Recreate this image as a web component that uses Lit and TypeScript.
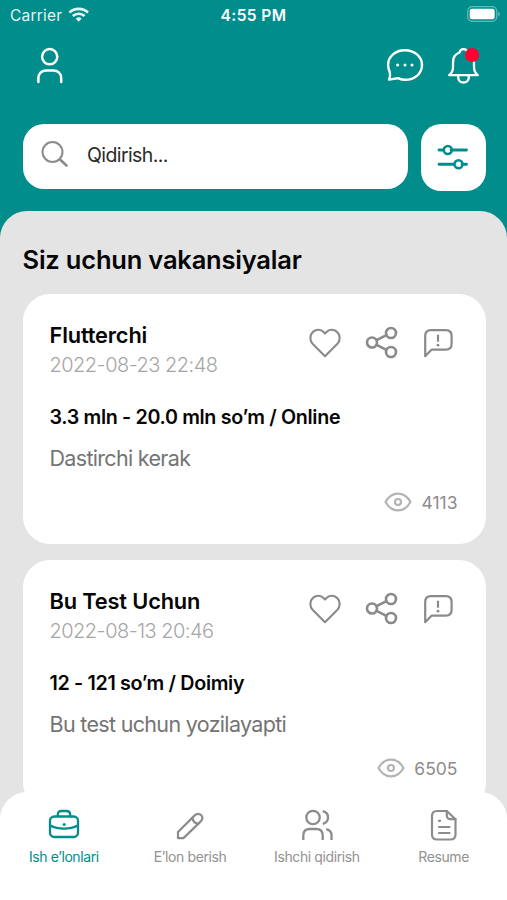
import { LitElement, html, css, svg } from "lit";
import { customElement, property } from "lit/decorators.js";
import { classMap } from "lit/directives/class-map.js";

const icon = (w: number, h: number, body: unknown) =>
  html`<svg width=${w} height=${h} viewBox="0 0 ${w} ${h}" fill="none" stroke="currentColor"
    stroke-linecap="round" stroke-linejoin="round">${body}</svg>`;

const icons = {
  wifi: icon(22, 16, svg`
    <g stroke-width="2.7" stroke-linecap="butt">
      <path d="M1.4 5.5a13.6 13.6 0 0 1 18.6 0"/><path d="M4.8 9.1a8.6 8.6 0 0 1 11.8 0"/>
    </g>
    <path d="M10.7 14.7l-3-3a4.4 4.4 0 0 1 6 0z" fill="currentColor" stroke="none"/>`),
  battery: icon(34, 16, svg`
    <rect x=".7" y=".7" width="29" height="14.6" rx="4.5" stroke-width="1.2" opacity=".4"/>
    <rect x="2.7" y="2.7" width="25" height="10.6" rx="2.4" fill="currentColor" stroke="none"/>
    <path d="M31.2 5.6v4.8q1.7-.7 1.7-2.4t-1.7-2.4z" fill="currentColor" stroke="none" opacity=".4"/>`),
  user: icon(26, 38, svg`
    <g stroke-width="2.5"><circle cx="12.7" cy="9.7" r="7.6"/>
    <path d="M1.4 35v-3.6c0-5 3-8 8-8h6.800c5 0 8 3 8 8V35"/></g>`),
  chat: icon(38, 36, svg`
    <path stroke-width="2.4" d="M3 31.500c1-2.400 1.500-4.800.8-7.300C2.700 21.500 2.100 19.300 2.100 16.900 2.100 8.400 9.500 2.200 18.900 2.200S36 8.600 36 17s-7.200 14.800-17 14.800c-2.500 0-4.200-.5-6.300-1.500-3.100-.4-6.300 1.200-9.700 1.200z"/>
    <g fill="currentColor" stroke="none"><circle cx="11.600" cy="17" r="1.500"/><circle cx="19" cy="17" r="1.500"/><circle cx="26" cy="17" r="1.500"/></g>`),
  bell: icon(34, 38, svg`
    <g stroke-width="2.3"><path d="M2.200 28.200h28.600c-2.600-2-3.800-4.600-3.800-8.200v-4.500c0-5-2.200-8.700-6.500-10C20 3.200 18.500 2.200 16.500 2.200S13 3.300 12.500 5.500C8.200 7 6 10.700 6 15.500V20c0 3.600-1.200 6.200-3.800 8.200z"/>
    <path d="M11.200 28.500v1.700c0 3.300 2.400 5.300 5.300 5.300s5.300-2 5.300-5.300v-1.700"/></g>`),
  search: icon(28, 28, svg`
    <circle cx="11.500" cy="12" r="10" stroke-width="2"/><path stroke-width="2.600" d="M19 19.500l6.500 6"/>`),
  filter: icon(32, 26, svg`
    <g stroke-width="2.900"><path d="M2 6h4M14 6h15.500M2 20.200h14.500M25 20.200h4.500"/></g>
    <g stroke-width="2.600"><circle cx="10.800" cy="6" r="4"/><circle cx="21.500" cy="20.200" r="4"/></g>`),
  heart: icon(32, 30, svg`
    <path stroke-width="2.100" d="M16 28.200L3.800 16C.4 12.400.6 6.900 4 3.900s8-2.600 10.500.1L16 5.600l1.500-1.600c2.500-2.700 7.100-3.100 10.500-.1s3.600 8.500.2 12.100z"/>`),
  share: icon(34, 34, svg`
    <g stroke-width="2.600"><circle cx="7" cy="16.500" r="5"/><circle cx="26" cy="7" r="5"/><circle cx="26" cy="26" r="5"/>
    <path d="M11.600 14.200l9.800-5M11.600 18.800l9.800 5"/></g>`),
  report: icon(30, 30, svg`
    <path stroke-width="2.200" d="M2.200 28.200V8c0-3.800 2-5.800 5.800-5.800h14.800c3.800 0 5.800 2 5.800 5.800v7.800c0 3.800-2 5.800-5.800 5.800H8.700z"/>
    <path stroke-width="2.200" stroke-linecap="butt" d="M15 6.700v7"/><circle cx="15" cy="17.200" r="1.400" fill="currentColor" stroke="none"/>`),
  eye: icon(28, 20, svg`
    <path stroke-width="2.200" d="M1.500 10c3-5.400 7.300-8.400 12.500-8.400s9.500 3 12.500 8.400c-3 5.400-7.300 8.400-12.500 8.400S4.500 15.400 1.500 10z"/>
    <circle stroke-width="2.200" cx="14" cy="10" r="3"/>`),
  briefcase: icon(32, 30, svg`
    <g stroke-width="2.300"><rect x="2" y="7.500" width="28" height="20.500" rx="4.200"/>
    <path d="M9.800 7.300V5.700c0-2.500 1.300-3.700 3.700-3.700h5c2.400 0 3.700 1.200 3.700 3.700v1.600"/>
    <path d="M2.200 16.500c8 4.200 19.600 4.200 27.600 0"/></g>
    <circle cx="16.200" cy="15.500" r="1.500" fill="currentColor" stroke="none"/>`),
  pencil: icon(32, 30, svg`
    <g stroke-width="2.200"><path d="M4 28.200v-6.200L21 5.100c1.800-1.700 4.400-1.700 6 0s1.700 4.200 0 6L10 27.600q-.6.600-1.500.6z"/>
    <path d="M18.500 7.600c.3 3.500 2.600 5.800 6 6.100"/></g>`),
  people: icon(32, 32, svg`
    <g stroke-width="2.300" stroke-linecap="butt"><circle cx="12" cy="8.500" r="6.700"/>
    <path d="M2.300 31v-4.500c0-4.300 2.200-6.500 6.500-6.500h6.400c4.300 0 6.500 2.200 6.500 6.500V31"/>
    <path d="M21.700 2.200c3.200.6 5.300 3 5.300 6.300s-2.100 5.700-5.300 6.300M25.200 20.200c3.500.7 5.300 2.900 5.300 6.300V31"/></g>`),
  resume: icon(28, 32, svg`
    <g stroke-width="2.200"><path d="M16.800 2H7C3.600 2 2 3.600 2 7v18.500c0 3.400 1.600 5 5 5h13.500c3.400 0 5-1.600 5-5V10.200z"/>
    <path d="M16.800 2v4.200c0 2.500 1.500 4 4 4h4.700M9 18h10.500M9 24h10.500"/><path d="M9 11.800h1.200"/></g>`),
};

type IconName = keyof typeof icons;

interface Vacancy {
  title: string;
  date: string;
  pay: string;
  text: string;
  views: string;
}

const vacancies: Vacancy[] = [
  { title: "Flutterchi", date: "2022-08-23 22:48", pay: "3.3 mln - 20.0 mln so’m / Online", text: "Dastirchi kerak", views: "4113" },
  { title: "Bu Test Uchun", date: "2022-08-13 20:46", pay: "12 - 121 so’m / Doimiy", text: "Bu test uchun yozilayapti", views: "6505" },
];

const tabs: { label: string; icon: IconName; active?: boolean }[] = [
  { label: "Ish e’lonlari", icon: "briefcase", active: true },
  { label: "E’lon berish", icon: "pencil" },
  { label: "Ishchi qidirish", icon: "people" },
  { label: "Resume", icon: "resume" },
];

@customElement("vacancy-card")
class VacancyCard extends LitElement {
  @property({ attribute: false }) item!: Vacancy;

  static styles = css`
    :host { display: block; box-sizing: border-box; height: 250px; padding: 27px 27px 0 27px; border-radius: 27px; background: #fff; }
    svg { display: block; flex: none; }
    .head { display: flex; justify-content: space-between; height: 56px; }
    .title { font-size: 21.800px; line-height: 28px; font-weight: 600; letter-spacing: -0.15px; color: #060606; }
    .date { font-size: 20px; line-height: 24px; margin-top: 4px; font-weight: 300; letter-spacing: -0.52px; color: #a6a6a6; }
    .actions { display: flex; align-items: center; gap: 24px; height: 43px; color: #8a8a8a; margin-right: 5.500px; }
    .pay { margin-top: 25.500px; font-size: 19.700px; line-height: 28px; font-weight: 600; letter-spacing: -0.34px; color: #060606; }
    .text { margin-top: 13.500px; font-size: 21.500px; line-height: 28px; font-weight: 400; letter-spacing: -0.68px; color: #747474; }
    .views { display: flex; align-items: center; justify-content: flex-end; gap: 9px; margin: 19px 1px 0 0; height: 22px; color: #b4b4b4; }
    .count { font-size: 17.500px; letter-spacing: 0; color: #8d8d8d; }
    .title, .date, .pay, .text { white-space: nowrap; }
  `;

  render() {
    const v = this.item;
    return html`
      <div class="head">
        <div><div class="title">${v.title}</div><div class="date">${v.date}</div></div>
        <div class="actions">${icons.heart}${icons.share}${icons.report}</div>
      </div>
      <div class="pay">${v.pay}</div>
      <div class="text">${v.text}</div>
      <div class="views">${icons.eye}<span class="count">${v.views}</span></div>
    `;
  }
}

@customElement("app-root")
class AppRoot extends LitElement {
  static styles = css`
    :host { display: flex; flex-direction: column; height: 900px; width: 507px; overflow: hidden; background: #008d8c; font-family: Inter, "Noto Sans", sans-serif; }
    svg { display: block; flex: none; }
    .status { display: grid; grid-template-columns: 1fr auto 1fr; align-items: center; height: 30px; padding: 0 6px 0 10px; box-sizing: border-box; color: #fff; font-size: 15.500px; flex: none; }
    .carrier { display: flex; align-items: center; gap: 6px; letter-spacing: 0.2px; color: #e4f4f4; }
    .time { font-weight: 600; letter-spacing: 0.4px; margin-right: 4px; }
    .battery { justify-self: end; margin-top: -2px; }
    .top { display: flex; align-items: center; height: 70px; padding: 2px 26px 0 37px; color: #fff; box-sizing: border-box; flex: none; }
    .right { display: flex; align-items: center; gap: 23px; margin-left: auto; }
    .bell { position: relative; }
    .dot { position: absolute; left: 18px; top: 1px; width: 13.500px; height: 13.500px; border-radius: 50%; background: #ff0030; }
    .tools { display: flex; gap: 13.500px; padding: 23.500px 21.500px 0 22.500px; height: 111px; box-sizing: border-box; flex: none; }
    .field { display: flex; align-items: center; gap: 18px; flex: 1; height: 65px; box-sizing: border-box; padding: 0 0 4px 18.500px; border-radius: 21px; background: #fff; color: #8b8b8b; }
    .placeholder { font-size: 19.500px; font-weight: 400; letter-spacing: -0.6px; color: #2a2a2a; padding-top: 1px; }
    .filter { display: grid; place-items: center; width: 64.500px; height: 67.500px; border-radius: 20px; background: #fff; color: #008d8c; }
    .sheet { flex: 1; min-height: 0; overflow: hidden; background: #e4e4e4; border-radius: 27px 27px 0 0; padding: 0 21.500px 0 22.500px; }
    .heading { margin: 0; padding: 33px 0 18px; font-size: 25.500px; line-height: 32px; font-weight: 600; letter-spacing: -0.2px; color: #060606; white-space: nowrap; }
    .list { display: flex; flex-direction: column; gap: 16px; }
    .nav { display: grid; grid-template-columns: repeat(4, 1fr); flex: none; height: 108px; margin-top: -108px; position: relative; background: #fff; border-radius: 27px 27px 0 0; }
    .tab { display: flex; flex-direction: column; align-items: center; padding-top: 16px; color: #8c8c8c; }
    .glyph { height: 34px; display: grid; place-items: center; }
    .label { font-size: 14px; line-height: 20px; margin-top: 5px; letter-spacing: -0.4px; white-space: nowrap; font-weight: 400; color: #929292; }
    .active, .active .label { color: #008d8c; }
    .active .label { padding-left: 1px; }
    .active .glyph { padding: 0 0 2px 2px; height: 32px; }
  `;

  render() {
    return html`
      <div class="status">
        <div class="carrier">Carrier ${icons.wifi}</div>
        <div class="time">4:55 PM</div>
        <div class="battery">${icons.battery}</div>
      </div>
      <div class="top">
        ${icons.user}
        <div class="right">${icons.chat}<div class="bell">${icons.bell}<span class="dot"></span></div></div>
      </div>
      <div class="tools">
        <div class="field">${icons.search}<span class="placeholder">Qidirish...</span></div>
        <div class="filter">${icons.filter}</div>
      </div>
      <div class="sheet">
        <h1 class="heading">Siz uchun vakansiyalar</h1>
        <div class="list">${vacancies.map((v) => html`<vacancy-card .item=${v}></vacancy-card>`)}</div>
      </div>
      <div class="nav">
        ${tabs.map((t) => html`
          <div class=${classMap({ tab: true, active: !!t.active })}>
            <div class="glyph">${icons[t.icon]}</div>
            <div class="label">${t.label}</div>
          </div>`)}
      </div>
    `;
  }
}
